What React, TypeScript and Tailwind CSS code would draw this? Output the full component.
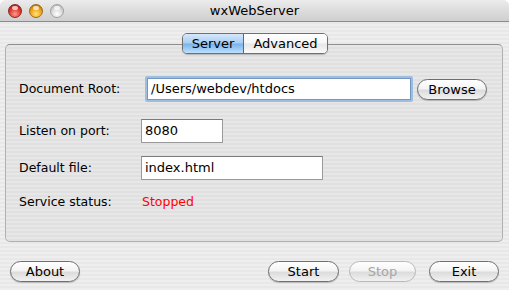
import React from 'react';

// Aqua pinstripe window with one tab panel and a button row
const stripes =
  'bg-[repeating-linear-gradient(180deg,#eeeeee_0px,#eeeeee_2px,#e8e8e8_2px,#e8e8e8_4px)]';
const panelStripes =
  'bg-[repeating-linear-gradient(180deg,#e7e7e7_0px,#e7e7e7_2px,#e0e0e0_2px,#e0e0e0_4px)]';

const TrafficLight: React.FC<{ color: 'red' | 'yellow' | 'gray' }> = ({ color }) => {
  const fill =
    color === 'red'
      ? 'bg-[radial-gradient(circle_at_50%_75%,#ff9a8a_0%,#e0332a_55%,#8c1a14_100%)] border-[#8a2a22]'
      : color === 'yellow'
        ? 'bg-[radial-gradient(circle_at_50%_75%,#ffe37a_0%,#f0a010_55%,#9a5a08_100%)] border-[#9a6a1a]'
        : 'bg-[radial-gradient(circle_at_50%_75%,#ffffff_0%,#d6d6d6_55%,#a8a8a8_100%)] border-[#a0a0a0]';
  return (
    <div className={`relative w-[14px] h-[14px] rounded-full border ${fill}`}>
      <div className="absolute left-[3px] top-[1px] w-[6px] h-[4px] rounded-full bg-white/70" />
    </div>
  );
};

interface AquaButtonProps {
  label: string;
  width: string;
  disabled?: boolean;
}

const AquaButton: React.FC<AquaButtonProps> = ({ label, width, disabled = false }) => (
  <div
    className={`
      ${width} h-[21px] rounded-full border flex items-center justify-center
      bg-[linear-gradient(180deg,#ffffff_0%,#f4f4f4_45%,#dcdcdc_55%,#f2f2f2_100%)]
      ${disabled
        ? 'border-[#b8b8b8] text-[#a6a6a6]'
        : 'border-[#6e6e6e] text-black shadow-[0_1px_1px_rgba(0,0,0,0.2)]'
      }
    `}
  >
    <span className="text-[13px] leading-none">{label}</span>
  </div>
);

const Label: React.FC<{ children: React.ReactNode }> = ({ children }) => (
  <div className="w-[122px] text-[12.5px] text-black">{children}</div>
);

const TextBox: React.FC<{ value: string; width: string }> = ({ value, width }) => (
  <div
    className={`${width} h-[24px] bg-white border border-[#9a9a9a] border-t-[#7a7a7a] flex items-center pl-[3px] text-[13px] text-black`}
  >
    {value}
  </div>
);

export default function App() {
  return (
    <div
      className={`w-[509px] h-[290px] overflow-hidden rounded-t-[6px] flex flex-col ${stripes}`}
      style={{ fontFamily: '"DejaVu Sans", "Liberation Sans", sans-serif' }}
    >
      {/* title bar */}
      <div className="h-[22px] shrink-0 flex items-center bg-[linear-gradient(180deg,#ececec_0%,#dcdcdc_50%,#cfcfcf_100%)] border-b border-[#8c8c8c] relative">
        <div className="flex items-center gap-[7px] pl-[8px]">
          <TrafficLight color="red" />
          <TrafficLight color="yellow" />
          <TrafficLight color="gray" />
        </div>
        <div className="absolute inset-0 flex items-center justify-center text-[13px] text-black">
          wxWebServer
        </div>
      </div>

      {/* tabs */}
      <div className="relative z-10 mt-[11px] flex justify-center pl-[1px]">
        <div className="flex h-[21px] rounded-[5px] border border-[#6f6f6f] overflow-hidden shadow-[0_1px_1px_rgba(0,0,0,0.2)]">
          <div className="w-[61px] flex items-center justify-center text-[13px] text-black border-r border-[#4a6a98] bg-[linear-gradient(180deg,#d6e8fb_0%,#a6cdf2_48%,#78b2ec_52%,#bfe0fb_100%)]">
            Server
          </div>
          <div className="w-[83px] flex items-center justify-center text-[13px] text-black bg-[linear-gradient(180deg,#ffffff_0%,#f6f6f6_48%,#e6e6e6_52%,#fafafa_100%)]">
            Advanced
          </div>
        </div>
      </div>

      {/* panel */}
      <div
        className={`mx-[5px] mr-[6px] -mt-[10px] h-[198px] rounded-[5px] border border-[#b0b0b0] border-t-[#8e8e8e] ${panelStripes} pl-[13px] pt-[31px]`}
      >
        <div className="flex items-center h-[26px]">
          <Label>Document Root:</Label>
          <div className="ml-[4px] w-[268px] h-[26px] rounded-[2px] bg-[#9dbee0] p-[2px]">
            <div className="w-full h-full bg-white border border-[#7496bf] flex items-center pl-[3px] text-[13px] text-black">
              /Users/webdev/htdocs
            </div>
          </div>
          <div className="ml-[4px]">
            <AquaButton label="Browse" width="w-[70px]" />
          </div>
        </div>

        <div className="flex items-center mt-[17px]">
          <Label>Listen on port:</Label>
          <TextBox value="8080" width="w-[82px]" />
        </div>

        <div className="flex items-center mt-[13px]">
          <Label>Default file:</Label>
          <TextBox value="index.html" width="w-[182px]" />
        </div>

        <div className="flex items-center h-[20px] mt-[12px]">
          <Label>Service status:</Label>
          <span className="text-[12.5px] text-[#ff0000] ml-[1px]">Stopped</span>
        </div>
      </div>

      {/* bottom buttons */}
      <div className="flex items-center mt-[19px] px-[10px]">
        <AquaButton label="About" width="w-[70px]" />
        <div className="flex-1" />
        <AquaButton label="Start" width="w-[71px]" />
        <div className="ml-[10px]">
          <AquaButton label="Stop" width="w-[67px]" disabled />
        </div>
        <div className="ml-[13px]">
          <AquaButton label="Exit" width="w-[70px]" />
        </div>
      </div>
    </div>
  );
}
